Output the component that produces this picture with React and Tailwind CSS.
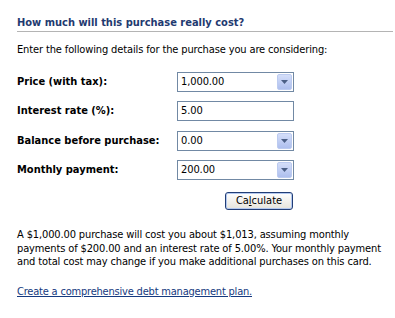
import React from 'react';

const font = { fontFamily: '"DejaVu Sans Condensed", "DejaVu Sans", sans-serif' };

function Arrow() {
  return (
    <div className="flex h-[16px] w-[15px] items-center justify-center rounded-[2px] border border-[#bccbf0] bg-gradient-to-b from-[#d4def9] to-[#aebfee]">
      <svg width="7" height="4" viewBox="0 0 7 4">
        <path d="M0 0h7L3.5 4z" fill="#4b5f86" />
      </svg>
    </div>
  );
}

function Field({ label, value, combo, className }) {
  return (
    <div className={`flex items-center ${className}`}>
      <div className="w-[160px] text-[11px] font-bold text-black">{label}</div>
      <div className="flex h-[20px] w-[117px] items-center justify-between border border-[#7189a4] bg-white pl-[3px] pr-[1px]">
        <span className="text-[11px] tracking-[-0.1px] text-black">{value}</span>
        {combo && <Arrow />}
      </div>
    </div>
  );
}

export default function App() {
  return (
    <div className="h-[318px] w-[395px] overflow-hidden bg-white" style={font}>
      <div className="pl-[17px] pr-[2px] pt-[16px]">
        <div className="text-[11px] font-bold leading-[13px] text-[#1f3a70]">How much will this purchase really cost?</div>
        <div className="mt-[2px] h-px bg-[#b4b4b4]" />
        <div className="mt-[11px] text-[11px] leading-[13px] tracking-[-0.13px] text-black">Enter the following details for the purchase you are considering:</div>

        <Field className="mt-[16px]" label="Price (with tax):" value="1,000.00" combo />
        <Field className="mt-[9px]" label="Interest rate (%):" value="5.00" />
        <Field className="mt-[10px]" label="Balance before purchase:" value="0.00" combo />
        <Field className="mt-[9px]" label="Monthly payment:" value="200.00" combo />

        <div className="mt-[12px] flex pl-[208px]">
          <button className="h-[18px] w-[68px] rounded-[3px] border border-[#223e76] bg-gradient-to-b from-[#ffffff] to-[#e6e4dc] text-[11px] leading-[14px] text-black shadow-[inset_0_0_0_1px_#b3c8ef]">
            Ca<span className="underline">l</span>culate
          </button>
        </div>

        <p className="mt-[18px] text-[11px] leading-[13.5px] tracking-[-0.13px] text-black">
          A $1,000.00 purchase will cost you about $1,013, assuming monthly<br />
          payments of $200.00 and an interest rate of 5.00%. Your monthly payment<br />
          and total cost may change if you make additional purchases on this card.
        </p>

        <a href="#" className="mt-[16px] block text-[11px] leading-[13px] tracking-[-0.2px] text-[#153a80] underline">
          Create a comprehensive debt management plan.
        </a>
      </div>
    </div>
  );
}
